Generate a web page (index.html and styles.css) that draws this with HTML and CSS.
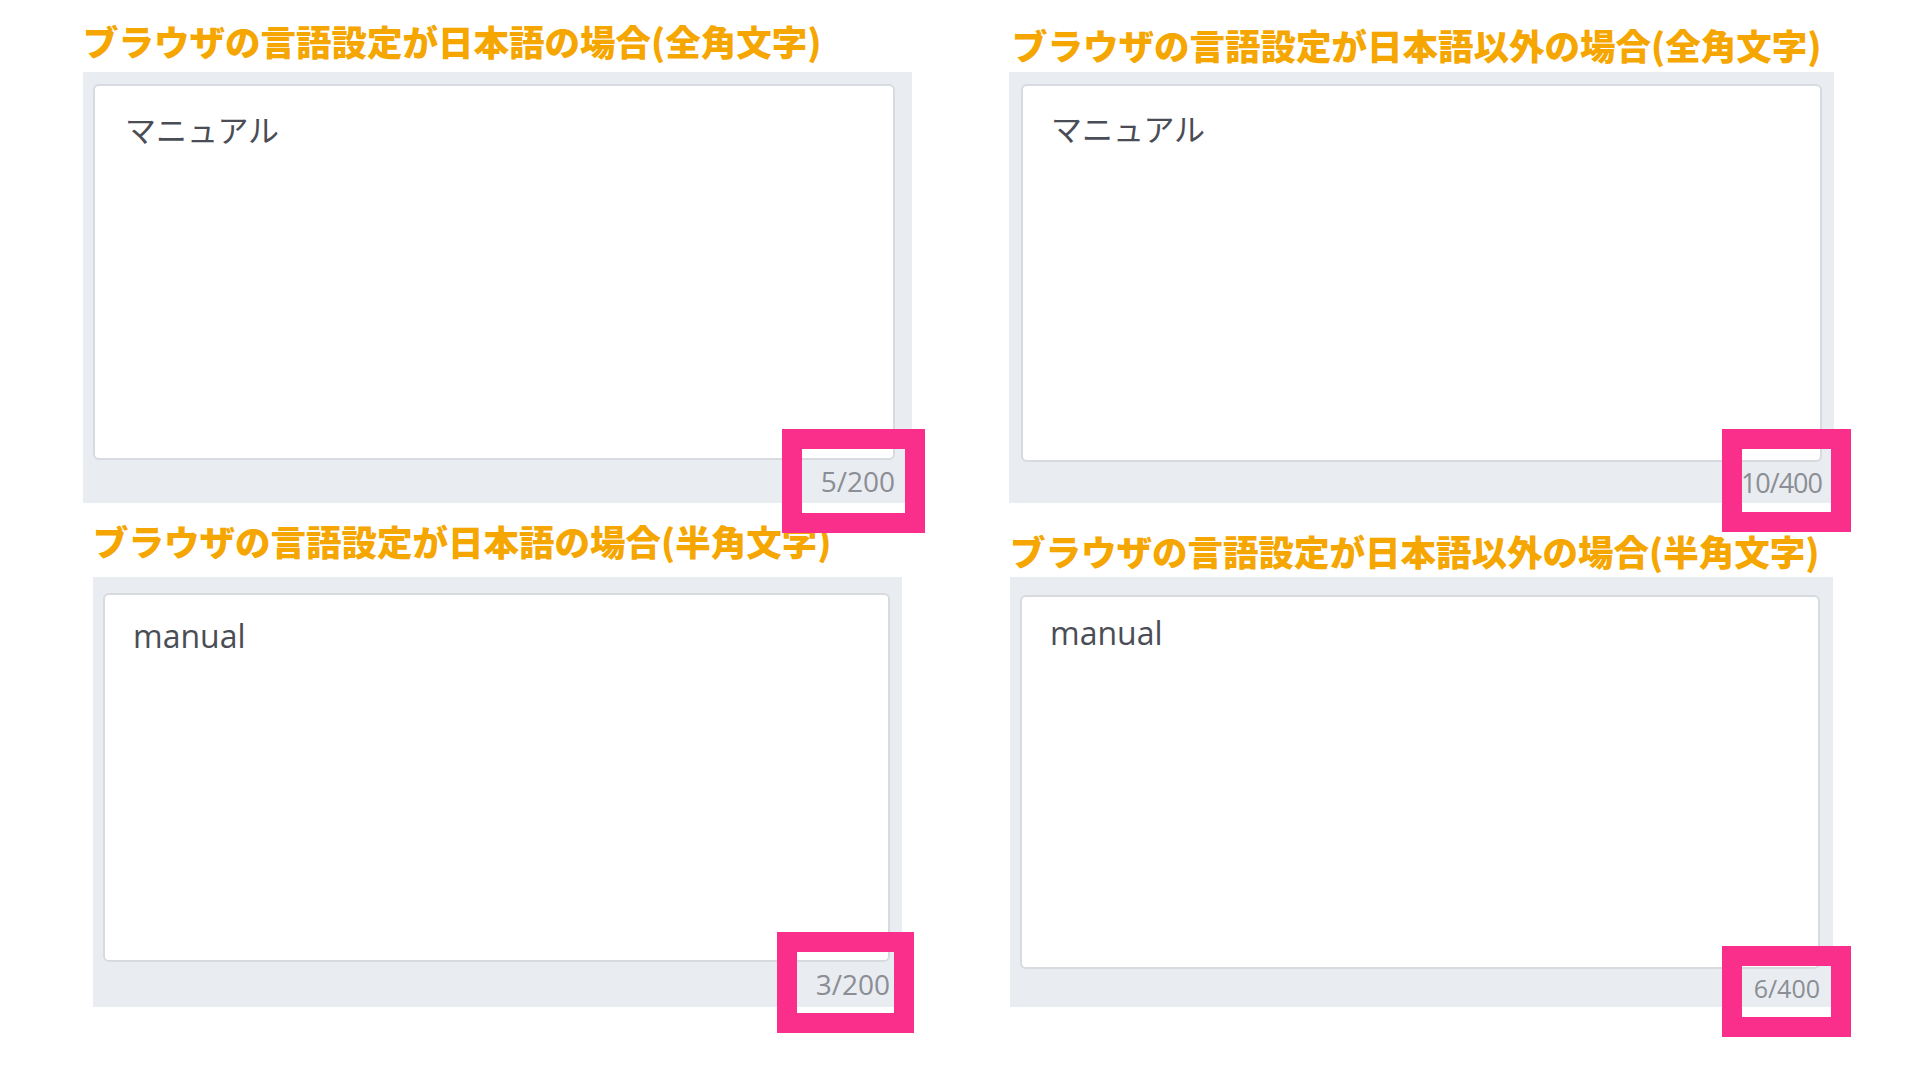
FILE: index.html
```html
<!DOCTYPE html>
<html lang="ja">
<head>
<meta charset="utf-8">
<title>文字数カウンター</title>
<link rel="stylesheet" href="styles.css">
</head>
<body>
<div class="board">
  <div class="col col-left">
    <section class="sec sec-tl">
      <h2 class="title">ブラウザの言語設定が日本語の場合(全角文字)</h2>
      <div class="panel">
        <div class="field jp">マニュアル</div>
        <div class="counter">5/200</div>
        <div class="mark"></div>
      </div>
    </section>
    <section class="sec sec-bl">
      <h2 class="title">ブラウザの言語設定が日本語の場合(半角文字)</h2>
      <div class="panel">
        <div class="field en">manual</div>
        <div class="counter">3/200</div>
        <div class="mark"></div>
      </div>
    </section>
  </div>
  <div class="col col-right">
    <section class="sec sec-tr">
      <h2 class="title">ブラウザの言語設定が日本語以外の場合(全角文字)</h2>
      <div class="panel">
        <div class="field jp">マニュアル</div>
        <div class="counter">10/400</div>
        <div class="mark"></div>
      </div>
    </section>
    <section class="sec sec-br">
      <h2 class="title">ブラウザの言語設定が日本語以外の場合(半角文字)</h2>
      <div class="panel">
        <div class="field en">manual</div>
        <div class="counter">6/400</div>
        <div class="mark"></div>
      </div>
    </section>
  </div>
</div>
</body>
</html>
```

FILE: styles.css
```css
html, body {
  margin: 0;
  padding: 0;
  background: #ffffff;
}

body {
  width: 1920px;
  height: 1080px;
  overflow: hidden;
  font-family: "Open Sans", "Noto Sans CJK JP", sans-serif;
}

.board {
  display: flex;
  gap: 97px;
  padding-left: 83px;
}

.col {
  display: flex;
  flex-direction: column;
}

.col-left {
  width: 829px;
  padding-top: 21px;
}

.col-right {
  width: 826px;
  padding-top: 25px;
}

.sec {
  display: flex;
  flex-direction: column;
}

.title {
  margin: 0;
  font-family: "Noto Sans CJK JP", sans-serif;
  font-weight: 900;
  font-size: 35.5px;
  line-height: 40px;
  height: 40px;
  color: #f5a600;
  white-space: nowrap;
}

.panel {
  position: relative;
  background: #e9ecf0;
  display: flex;
  flex-direction: column;
}

.field {
  box-sizing: border-box;
  background: #ffffff;
  border: 2px solid #d7dade;
  border-radius: 6px;
  color: #4a4d55;
}

.field.jp {
  font-family: "Noto Sans CJK JP", sans-serif;
  font-size: 31px;
  line-height: 40px;
}

.field.en {
  font-family: "Open Sans", sans-serif;
  font-size: 32px;
  line-height: 44px;
}

.counter {
  text-align: right;
  font-family: "Open Sans", sans-serif;
  font-size: 28px;
  color: #8b8e94;
}

.mark {
  position: absolute;
  box-sizing: border-box;
  border: 20px solid #f92f8b;
}

/* top-left */
.sec-tl .panel {
  margin-top: 11px;
  width: 829px;
  height: 431px;
  box-sizing: border-box;
  padding: 12px 17px 0 10px;
}
.sec-tl .field {
  height: 376px;
  padding: 23px 30px;
}
.sec-tl .counter {
  height: 43px;
  line-height: 43px;
}
.sec-tl .mark {
  left: 699px;
  top: 357px;
  width: 143px;
  height: 104px;
}

/* bottom-left */
.sec-bl {
  margin-top: 18px;
  margin-left: 10px;
}
.sec-bl .panel {
  margin-top: 16px;
  width: 809px;
  height: 430px;
  box-sizing: border-box;
  padding: 16px 12px 0 10px;
}
.sec-bl .field {
  height: 369px;
  padding: 19px 28px;
}
.sec-bl .counter {
  height: 45px;
  line-height: 45px;
}
.sec-bl .mark {
  left: 684px;
  top: 355px;
  width: 137px;
  height: 101px;
}

/* top-right */
.sec-tr .title {
  margin-left: 3px;
}
.sec-tr .panel {
  margin-top: 7px;
  width: 825px;
  height: 431px;
  box-sizing: border-box;
  padding: 12px 12px 0 12px;
}
.sec-tr .field {
  height: 378px;
  padding: 22px 28px;
}
.sec-tr .counter {
  height: 41px;
  line-height: 41px;
  font-size: 27px;
  letter-spacing: -1px;
}
.sec-tr .mark {
  left: 713px;
  top: 357px;
  width: 129px;
  height: 103px;
}

/* bottom-right */
.sec-br {
  margin-top: 28px;
  margin-left: 1px;
}
.sec-br .panel {
  margin-top: 6px;
  width: 823px;
  height: 430px;
  box-sizing: border-box;
  padding: 18px 13px 0 10px;
}
.sec-br .field {
  height: 374px;
  padding: 14px 28px;
}
.sec-br .counter {
  height: 38px;
  line-height: 38px;
  font-size: 25px;
}
.sec-br .mark {
  left: 712px;
  top: 369px;
  width: 129px;
  height: 91px;
}
```
